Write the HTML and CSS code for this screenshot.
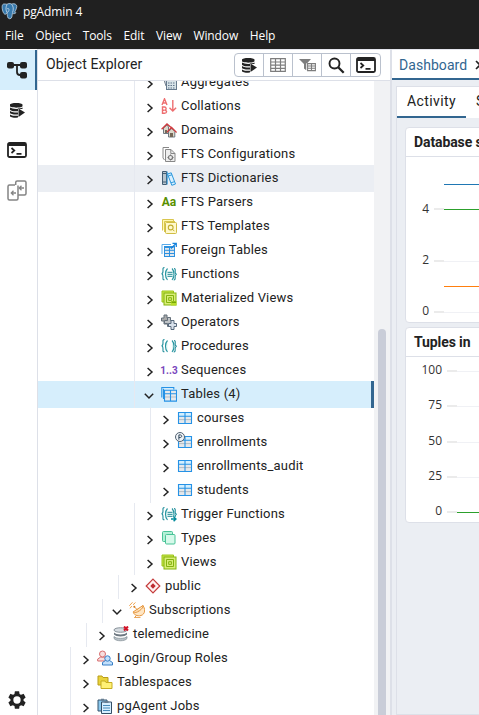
FILE: index.html
```
<!DOCTYPE html>
<html lang="en">
<head>
<meta charset="utf-8">
<title>pgAdmin 4</title>
<link rel="stylesheet" href="styles.css">
</head>
<body>
<svg class="defs" width="0" height="0">
  <symbol id="right" viewBox="0 0 8 10"><path d="M1.6 1l4.400 4-4.400 4" fill="none" stroke="#222" stroke-width="1.500"/></symbol>
  <symbol id="down" viewBox="0 0 10 8"><path d="M.8 1.800L5 6l4.200-4.200" fill="none" stroke="#222" stroke-width="1.500"/></symbol>
  <symbol id="dbplay" viewBox="0 0 16 16"><path d="M1 2.700C1 .4 13.500.4 13.500 2.700V4C13.500 6.200 1 6.200 1 4zM1 5.600c2.500 1.800 10 1.800 12.500 0v1.500L9 6.700v2.600C5 9.500 1 8.700 1 7.400zM1 9c2 1.400 5 1.600 8 1.500v1.900c-4 .2-8-.3-8-1.700zM1 12.400c2 1.300 5 1.500 8 1.400v1.800c-4 .2-8-.3-8-1.700z" fill="#222"/><path d="M9.500 6.500l6.500 4-6.500 4.500z" fill="#222"/></symbol>
  <symbol id="terminal" viewBox="0 0 20 16"><rect x="1" y="1" width="18" height="14" rx="1.500" fill="none" stroke="#222" stroke-width="1.800"/><path d="M1 1.500h18v2.500H1z" fill="#222"/><path d="M4.500 6l2.800 2.500-2.800 2.500M9.500 11.800h5" fill="none" stroke="#222" stroke-width="1.700"/></symbol>
  <symbol id="aggregates" viewBox="0 0 16 16"><path d="M1 0h8v12H5z" fill="#ccd3dc" stroke="#7c8794"/><rect x="5.500" y="1.500" width="10" height="14" fill="#d7e3e8" stroke="#667a8e"/><path d="M7 3.500h7v3H7z" fill="#a3cf3b"/><path d="M7 9h7M7 11.500h7M7 14h7" stroke="#61758c" stroke-dasharray="1.500 1"/></symbol>
  <symbol id="collations" viewBox="0 0 16 16"><path d="M1 7L3.500.8 6 7M1.800 5h3.400M1.500 9v6.200h2c2.700 0 2.700-3 .3-3 2-.3 1.600-3.200-.3-3.200zM1.500 12.200h2M11.800 2v11M8.500 9.800l3.300 3.300 3.300-3.300" fill="none" stroke="#ee6e70" stroke-width="1.400"/></symbol>
  <symbol id="domains" viewBox="0 0 16 16"><path d="M2.500 6v5.500h5V5L6 3zM7.500 9.500V15h6.300V9.500l-3-3z" fill="#ddd8cb" stroke="#6f7881"/><path d="M.6 7.300L6 2l5.800 5M5.600 10.500l5-5 5 5" fill="none" stroke="#cf3a3e" stroke-width="1.300"/><path d="M9 11h3v4H9zM4 8h2v3H4z" fill="#756858"/></symbol>
  <symbol id="ftsconfig" viewBox="0 0 16 16"><path d="M2 12V1.500h6M2 12l1.500 2" fill="none" stroke="#888"/><path d="M4.500 3.500H10l4 4v8H4.500z" fill="#eee" stroke="#888"/><path d="M9.800 3.500v4H14" fill="none" stroke="#888"/><circle cx="9.500" cy="11.500" r="2" fill="none" stroke="#777" stroke-width="1.200"/><path d="M9.500 8.500v1M9.500 13.500v1M6.500 11.500h1M11.500 11.500h1" stroke="#777"/></symbol>
  <symbol id="dictionary" viewBox="0 0 16 16"><path d="M1.500 1.500h4v13h-4z" fill="#b8c4cd" stroke="#435c72"/><path d="M1.500 3.500h4M1.500 12h4" stroke="#435c72"/><path d="M6.500 4l3.700-1.200 4.300 11.200-3.700 1.300z" fill="#d9f0ff" stroke="#2c98dc"/><path d="M7.300 6l3.600-1.200M10 12.800l3.700-1.200M6.200 1.500v13" stroke="#2c98dc"/></symbol>
  <symbol id="templates" viewBox="0 0 16 16"><path d="M1.500 12.500v-11h11v2M3.500 14V3.500H14" fill="#fff7b0" stroke="#d9c64f"/><rect x="4.500" y="4.500" width="11" height="11" rx="1" fill="#fff9cc" stroke="#d0bd45"/><circle cx="9.700" cy="9.500" r="2.400" fill="none" stroke="#c2ad30" stroke-width="1.100"/><path d="M11.400 11.200l2 2" stroke="#c2ad30"/></symbol>
  <symbol id="foreign" viewBox="0 0 16 16"><path d="M1 12V2.500h9" fill="none" stroke="#5aacea"/><rect x="3.500" y="4.500" width="10" height="10" fill="#e1e6eb" stroke="#2e91df"/><path d="M3.500 5.500h9M3.500 8.300h10M3.500 11.500h10M8.500 5v9.500" stroke="#2e91df"/><path d="M10 6.500l5-5M11.500 1.300h3.800v3.800" fill="none" stroke="#1582dc" stroke-width="1.200"/></symbol>
  <symbol id="braces" viewBox="0 0 16 16"><path d="M3.500 1.500C1.500 1.500 2 3 2 5c0 2-.5 2.700-1.500 2.700C1.500 7.700 2 9 2 11c0 2-.4 2.800 1.500 2.800M13 2.500c2 0 1 2.500 1.200 4 .1 1 .5 1.500 1.500 1.700-1 .2-1.300.8-1.500 1.800-.2 2 .5 4-1.500 4" fill="none" stroke="#218e9b" stroke-width="1.100"/><path d="M6.500 2.500C3.800 5.200 3.800 11 6.500 14M11 2.500c2.700 2.700 2.700 8.500 0 11.500" fill="#dff7f5" stroke="#26949f" stroke-width="1.100"/></symbol>
  <symbol id="functions" viewBox="0 0 16 16"><use href="#braces"/><path d="M6.500 6.300h5M6.500 8.300h5M6.500 10.300h5" stroke="#178692"/></symbol>
  <symbol id="trigger" viewBox="0 0 16 16"><use href="#functions"/><path d="M9 11h7v5H9z" fill="#fff"/><path d="M10 13h5M12.600 10.800l2.300 2.200-2.300 2.300" fill="none" stroke="#058c9c" stroke-width="1.500"/></symbol>
  <symbol id="views" viewBox="0 0 16 16"><path d="M1 1h11.500v11H1z" fill="#c7e44a" stroke="#9cc61a"/><rect x="3" y="3" width="12" height="12" fill="#d8ed77" stroke="#83b30e"/><path d="M5.500 5.500h7v7h-7zM7.700 7.700h2.700v2.700H7.700z" fill="none" stroke="#83b30e"/></symbol>
  <symbol id="matview" viewBox="0 0 16 16"><use href="#views"/><path d="M10 11h5.500v4.500H10z" fill="#b8dd2a"/><path d="M10.500 12.200h4.500" stroke="#699c00" stroke-width="1.300"/></symbol>
  <symbol id="operators" viewBox="0 0 16 16"><path d="M3 1h3v3h3v3H6v3H3V7H.5V4H3z" fill="#aaa" stroke="#65707b"/><path d="M6.500 3.500h3v3h3v3h-3v3h-3v-3h-3v-3h3z" fill="#c0c4c7" stroke="#65707b"/><path d="M10 6.500h3v3h2.500v3H13v3h-3v-3H7.500v-3H10z" fill="#d8e1eb" stroke="#56687c"/></symbol>
  <symbol id="table" viewBox="0 0 16 16"><rect x="1.500" y="2.500" width="13" height="11" fill="#e5e8eb"/><path d="M2 3h12v3H2z" fill="#d3efff"/><path d="M2 9.600h12" stroke="#b4bdc5"/><path d="M1.500 2.500h13v11h-13zM1.500 6.200h13M8 3v10.500" fill="none" stroke="#2592e6" stroke-width="1.100"/></symbol>
  <symbol id="tables" viewBox="0 0 16 16"><path d="M.8 11.500v-10h12v2M2.500 13V2.800" fill="#d6eefc" stroke="#2592e6" stroke-width="1.100"/><rect x="3.500" y="4.300" width="12" height="10.800" rx=".7" fill="#e6e9ec"/><path d="M4 11h11" stroke="#b4bdc5"/><path d="M3.500 4.300h12v10.800h-12zM3.500 7.700h12M9.500 4.500v10.600" fill="none" stroke="#2592e6" stroke-width="1.100"/></symbol>
  <symbol id="types" viewBox="0 0 16 16"><rect x="1.500" y="1.500" width="10" height="10" rx="1" fill="#b4f0d7" stroke="#49c397"/><rect x="4.500" y="4.500" width="9.500" height="9.500" rx="1" fill="#d6f9ea" stroke="#49c397"/></symbol>
  <symbol id="public" viewBox="0 0 16 16"><path d="M8 1.200L14.800 8 8 14.800 1.200 8z" fill="#fff1f0" stroke="#c53b3b" stroke-width="1.200"/><path d="M8 5.300L10.700 8 8 10.700 5.300 8z" fill="#bd2d31"/></symbol>
  <symbol id="subscription" viewBox="0 0 16 16"><path d="M14 3.500C17.500 9 15 13.500 10.500 13.800 7 14 4.300 12 4.300 9.800z" fill="#ffe6c4" stroke="#e5953c"/><path d="M4.300 9.800C5.500 11 8 10.500 10.500 8.700 13 7 14.500 4.800 14 3.500M5.500 5l3.300 3.300M7 14l-1.500 1.700h6" fill="none" stroke="#e5953c"/><circle cx="5.300" cy="4.800" r="1" fill="#d17b20"/><path d="M.3 3.800L3.500.3M1 6.300L2.800 4M4 2.800L6.500.5" stroke="#f0a34d"/></symbol>
  <symbol id="dboff" viewBox="0 0 16 16"><path d="M1 4c0-3 13-3 13 0s-13 3-13 0" fill="#d5dbe0" stroke="#89939b"/><path d="M1 6.500c2 2.500 11 2.500 13 0v2c-2 2.500-11 2.500-13 0z" fill="#6d7881"/><path d="M1 10.500c2 2.500 11 2.500 13 0v2c-2 3-11 3-13 0z" fill="#bac2c8" stroke="#7d8991" stroke-width=".7"/><path d="M11 .5l4 4M15 .5l-4 4" stroke="#d31327" stroke-width="2"/></symbol>
  <symbol id="roles" viewBox="0 0 16 16"><g fill="#f7dede" stroke="#d76c6e"><path d="M.7 11V9l3-2h3l2 2v2z"/><circle cx="5.500" cy="4" r="3"/></g><g fill="#c3e0fb" stroke="#377ec5"><path d="M5.500 15v-2.500l3-2h4l3 2V15z"/><circle cx="10.500" cy="8.500" r="2.700"/></g></symbol>
  <symbol id="spaces" viewBox="0 0 16 16"><path d="M1 2h4l1 1.500h5V11H1z" fill="#e9d33c" stroke="#b99d19"/><path d="M4 7h4l1 1.500h6v6H4z" fill="#fff176" stroke="#c6ad22"/></symbol>
  <symbol id="jobs" viewBox="0 0 16 16"><path d="M1 2h9v11H1z" fill="#8bc8ed" stroke="#34536d"/><path d="M4.500 4h10v11.500h-10z" fill="#d6efff" stroke="#344f66"/><path d="M7.500 3h4v2h-4zM4 .8h3v2H4z" fill="#667e92"/><path d="M6 7.500h7M6 10h7M6 12.500h7" stroke="#478bb9"/></symbol>
</svg>

<header class="top">
  <div class="title">
    <svg class="logo" width="17" height="17" viewBox="0 0 17 17"><path d="M3 1C1 1 .8 4 1.500 7s2 5 3.500 4l1-1.300c.3 2.500.2 5.800 2.500 6 2.800.2 2.500-3 2.800-5.200 1.500.5 3.200 0 3.600-.8-1 0-1.400-.2-1.200-.7C15 7 16.400 3.500 15.500 2.200 14 .2 12 .8 10.500 1 8.500.2 7 .6 6 1.300 5 1 4 1 3 1z" fill="#3679ad" stroke="#bdd0df" stroke-width=".8"/><path d="M6 1.500C4.300 4.500 5 8 6 9.500M10.500 1.200c2 2 2.300 5 1 8.500M6 6c1-1 2-.5 2 .7S7.300 9 6 9.500" fill="none" stroke="#cbdce8" stroke-width=".8"/></svg>
    <span>pgAdmin 4</span>
  </div>
  <nav class="menu"><span>File</span><span>Object</span><span>Tools</span><span>Edit</span><span>View</span><span>Window</span><span>Help</span></nav>
</header>

<main class="app">
  <aside class="rail">
    <div class="cell active"><svg width="20" height="18" viewBox="0 0 20 18"><path d="M5 4h10M10 4v7q0 3 3 3h3" fill="none" stroke="#222" stroke-width="1.800"/><rect y="1" width="7" height="6.500" rx="2" fill="#222"/><rect x="13" y="1" width="7" height="6.500" rx="2" fill="#222"/><rect x="13" y="11" width="7" height="6.500" rx="2" fill="#222"/></svg></div>
    <div class="cell"><svg width="16" height="16"><use href="#dbplay"/></svg></div>
    <div class="cell"><svg width="20" height="16"><use href="#terminal"/></svg></div>
    <div class="cell"><svg width="20" height="21" viewBox="0 0 20 21"><path d="M8 5H2.500Q1 5 1 6.500v12Q1 20 2.500 20h7q1.500 0 1.500-1.500V16M11 5.500V16M8.700 5V2.500Q8.700 1 10.200 1h7.300Q19 1 19 2.500v11q0 1.500-1.500 1.500H11" fill="none" stroke="#848484" stroke-width="1.500"/><path d="M9 13H4.500M6.500 10.800L4.300 13l2.200 2.200M17 8h-4.500M14.500 5.800L12.300 8l2.200 2.200" fill="none" stroke="#848484" stroke-width="1.300"/></svg></div>
    <div class="cell settings"><svg width="22" height="22" viewBox="0 0 24 24"><path d="M19.140 12.940c.04-.3.060-.61.060-.94s-.02-.64-.07-.94l2.030-1.580a.5.5 0 0 0 .12-.61l-1.920-3.320a.5.5 0 0 0-.59-.22l-2.390.96a7 7 0 0 0-1.620-.94l-.36-2.540a.5.5 0 0 0-.48-.41h-3.840a.5.500 0 0 0-.47.410l-.36 2.540a7 7 0 0 0-1.620.94l-2.390-.96a.5.500 0 0 0-.59.220L2.740 8.870a.5.500 0 0 0 .12.610l2.030 1.580a6 6 0 0 0 0 1.880l-2.030 1.580a.5.500 0 0 0-.12.610l1.920 3.320c.12.220.37.290.59.220l2.390-.96c.5.380 1.030.7 1.620.94l.36 2.540c.05.240.24.410.48.410h3.840c.24 0 .44-.17.470-.41l.36-2.540a7 7 0 0 0 1.620-.94l2.390.96c.22.080.47 0 .59-.22l1.920-3.320a.5.500 0 0 0-.12-.61zM12 16a4 4 0 1 1 0-8 4 4 0 0 1 0 8z" fill="#222"/></svg></div>
  </aside>

  <section class="explorer">
    <div class="bar">
      <h1>Object Explorer</h1>
      <div class="tools">
        <span><svg width="16" height="16"><use href="#dbplay"/></svg></span>
        <span><svg width="16" height="14" viewBox="0 0 16 14"><path d="M.7.700h14.600v12.600H.7zM.7 4h14.600M.7 7.200h14.600M.7 10.300h14.600M5.500 1v12M10.500 1v12" fill="none" stroke="#7d7d7d" stroke-width="1.200"/></svg></span>
        <span><svg width="17" height="14" viewBox="0 0 17 14"><path d="M0 1h12L7.500 6v6.500L5 10.500V6z" fill="#7d7d7d"/><path d="M7.500 5h9v8h-9z" fill="#fff"/><path d="M8.600 5.600h7.800v7H8.600zM8.600 8h7.800M8.600 10.300h7.800M12.500 5.600v7" fill="none" stroke="#7d7d7d" stroke-width="1.100"/></svg></span>
        <span><svg width="17" height="17" viewBox="0 0 17 17"><circle cx="6.500" cy="6.500" r="5" fill="none" stroke="#222" stroke-width="1.900"/><path d="M10.200 10.200l5.500 5.500" stroke="#222" stroke-width="2.300"/></svg></span>
        <span><svg width="20" height="16"><use href="#terminal"/></svg></span>
      </div>
    </div>
    <div class="scroller">
      <div class="tree">
        <div class="row l4"><svg class="r"><use href="#right"/></svg><svg class="i"><use href="#aggregates"/></svg><span>Aggregates</span></div>
        <div class="row l4"><svg class="r"><use href="#right"/></svg><svg class="i"><use href="#collations"/></svg><span>Collations</span></div>
        <div class="row l4"><svg class="r"><use href="#right"/></svg><svg class="i"><use href="#domains"/></svg><span>Domains</span></div>
        <div class="row l4"><svg class="r"><use href="#right"/></svg><svg class="i"><use href="#ftsconfig"/></svg><span>FTS Configurations</span></div>
        <div class="row l4 hover"><svg class="r"><use href="#right"/></svg><svg class="i"><use href="#dictionary"/></svg><span>FTS Dictionaries</span></div>
        <div class="row l4"><svg class="r"><use href="#right"/></svg><b class="i aa">Aa</b><span>FTS Parsers</span></div>
        <div class="row l4"><svg class="r"><use href="#right"/></svg><svg class="i"><use href="#templates"/></svg><span>FTS Templates</span></div>
        <div class="row l4"><svg class="r"><use href="#right"/></svg><svg class="i"><use href="#foreign"/></svg><span>Foreign Tables</span></div>
        <div class="row l4"><svg class="r"><use href="#right"/></svg><svg class="i"><use href="#functions"/></svg><span>Functions</span></div>
        <div class="row l4"><svg class="r"><use href="#right"/></svg><svg class="i"><use href="#matview"/></svg><span>Materialized Views</span></div>
        <div class="row l4"><svg class="r"><use href="#right"/></svg><svg class="i"><use href="#operators"/></svg><span>Operators</span></div>
        <div class="row l4"><svg class="r"><use href="#right"/></svg><svg class="i"><use href="#braces"/></svg><span>Procedures</span></div>
        <div class="row l4"><svg class="r"><use href="#right"/></svg><b class="i seq">1..3</b><span>Sequences</span></div>
        <div class="row l4 selected"><svg class="d"><use href="#down"/></svg><svg class="i"><use href="#tables"/></svg><span>Tables (4)</span></div>
        <div class="row l5"><svg class="r"><use href="#right"/></svg><svg class="i"><use href="#table"/></svg><span>courses</span></div>
        <div class="row l5"><svg class="r"><use href="#right"/></svg><svg class="i" viewBox="0 0 16 16"><use href="#table" width="16" height="16"/><circle cx="3" cy="3" r="4.500" fill="#eef3f7" stroke="#526170"/><path d="M1.900 5.700V.9h1.300c2 0 2 2.600 0 2.600H1.900" fill="none" stroke="#34495d"/></svg><span>enrollments</span></div>
        <div class="row l5"><svg class="r"><use href="#right"/></svg><svg class="i"><use href="#table"/></svg><span>enrollments_audit</span></div>
        <div class="row l5"><svg class="r"><use href="#right"/></svg><svg class="i"><use href="#table"/></svg><span>students</span></div>
        <div class="row l4"><svg class="r"><use href="#right"/></svg><svg class="i"><use href="#trigger"/></svg><span>Trigger Functions</span></div>
        <div class="row l4"><svg class="r"><use href="#right"/></svg><svg class="i"><use href="#types"/></svg><span>Types</span></div>
        <div class="row l4"><svg class="r"><use href="#right"/></svg><svg class="i"><use href="#views"/></svg><span>Views</span></div>
        <div class="row l3"><svg class="r"><use href="#right"/></svg><svg class="i"><use href="#public"/></svg><span>public</span></div>
        <div class="row l2"><svg class="d"><use href="#down"/></svg><svg class="i"><use href="#subscription"/></svg><span>Subscriptions</span></div>
        <div class="row l1"><svg class="r"><use href="#right"/></svg><svg class="i"><use href="#dboff"/></svg><span>telemedicine</span></div>
        <div class="row l0"><svg class="r"><use href="#right"/></svg><svg class="i"><use href="#roles"/></svg><span>Login/Group Roles</span></div>
        <div class="row l0"><svg class="r"><use href="#right"/></svg><svg class="i"><use href="#spaces"/></svg><span>Tablespaces</span></div>
        <div class="row l0"><svg class="r"><use href="#right"/></svg><svg class="i"><use href="#jobs"/></svg><span>pgAgent Jobs</span></div>
      </div>
      <div class="track"><div class="thumb"></div></div>
    </div>
  </section>

  <section class="dash">
    <div class="tabs"><div class="tab">Dashboard</div><svg width="10" height="10" viewBox="0 0 10 10"><path d="M1 1l8 8M9 1L1 9" stroke="#222" stroke-width="1.600"/></svg></div>
    <div class="panel">
      <div class="subtabs"><div class="sub on">Activity</div><div class="sub">State</div></div>
      <div class="card sessions">
        <h2>Database sessions</h2>
        <svg class="chart" width="200" height="165" viewBox="406 157 200 165">
          <g class="grid"><path d="M444 209.500h150M444 261.500h150M444 312.500h150"/></g>
          <g class="ticks"><path d="M434 209h10M434 261h10M434 312h10"/></g>
          <g class="lab"><text x="429" y="213">4</text><text x="429" y="264">2</text><text x="429" y="315">0</text></g>
          <path class="line" d="M444 184.500h150" stroke="#1f77b4"/><path class="line" d="M444 209.500h150" stroke="#2ca02c"/><path class="line" d="M444 286.500h150" stroke="#ff7f0e"/>
        </svg>
      </div>
      <div class="card tuples">
        <h2>Tuples in</h2>
        <svg class="chart" width="200" height="165" viewBox="406 357 200 165">
          <g class="grid"><path d="M457 371.500h150M457 406.500h150M457 442.500h150M457 477.500h150"/></g>
          <g class="ticks"><path d="M447 371h10M447 406h10M447 442h10M447 477h10M447 512h10"/></g>
          <g class="lab"><text x="442" y="374">100</text><text x="442" y="409">75</text><text x="442" y="445">50</text><text x="442" y="480">25</text><text x="442" y="515">0</text></g>
          <path class="line" d="M457 512.500h150" stroke="#2ca02c"/>
        </svg>
      </div>
    </div>
  </section>
</main>
</body>
</html>
```
FILE: styles.css
```
* { box-sizing: border-box; }
html, body { margin: 0; height: 100%; overflow: hidden; }
body { display: flex; flex-direction: column; background: #fff; color: #222; font-family: Roboto, sans-serif; }
svg { display: block; flex: none; overflow: visible; }
.defs { width: 0; height: 0; position: absolute; }

.top { height: 49px; flex: none; background: #202020; color: #fff; font-family: "Open Sans", sans-serif; font-size: 12px; letter-spacing: -.12px; }
.title { height: 24px; display: flex; align-items: center; gap: 5px; padding-left: 1px; }
.title .logo { margin-top: -2px; }
.title span { margin-top: -1px; }
.menu { height: 23px; display: flex; align-items: center; gap: 11.7px; padding-left: 5px; }

.app { flex: 1; min-height: 0; display: flex; }
.rail { width: 38px; flex: none; padding-top: 1px; border-right: 1px solid #dde0e8; display: flex; flex-direction: column; }
.cell { height: 40px; display: flex; align-items: center; padding-left: 7px; }
.cell:nth-child(2) { padding-left: 9px; }
.cell.active { background: #d6eefc; border-right: 2px solid #326690; }
.cell.settings { margin-top: auto; height: 30px; padding-left: 6px; }

.explorer { width: 353px; flex: none; display: flex; flex-direction: column; border-right: 1px solid #dde0e8; }
.bar { height: 32px; flex: none; border-top: 1px solid #e4e6ed; border-bottom: 1px solid #dde0e8; display: flex; align-items: center; justify-content: space-between; padding: 0 9px 0 8px; }
.bar h1 { margin: -2px 0 0; font-size: 14px; font-weight: 400; letter-spacing: .12px; }
.tools { display: flex; height: 24px; border: 1px solid #bac1cd; border-radius: 4px; }
.tools span { width: 29px; display: flex; align-items: center; justify-content: center; border-right: 1px solid #bac1cd; }
.tools span:last-child { border: 0; }
.scroller { flex: 1; min-height: 0; display: flex; overflow: hidden; }
.tree { width: 336px; margin-top: -10px; flex: none; }
.row { height: 24px; display: flex; align-items: center; font-size: 13px; letter-spacing: .18px; white-space: nowrap; background: linear-gradient(#e6e9f0, #e6e9f0) var(--g) 0 / 1px 100% no-repeat; padding: 0 0 2px calc(var(--g) + 12px); }
.l0 { --g: 32px; } .l1 { --g: 48px; } .l2 { --g: 64px; } .l3 { --g: 80px; } .l4 { --g: 96px; } .l5 { --g: 112px; }
.hover, .selected { height: 27px; margin: -2px 0 -1px; padding-bottom: 2px; padding-top: 1px; }
.hover { background-color: #ebeef3; }
.selected { background-color: #d6eefc; border-right: 3px solid #326690; }
.r { width: 8px; height: 10px; margin: 3px 7px 0 0; }
.d { width: 10px; height: 8px; margin: 3px 7px 0 -2px; }
.i { width: 16px; height: 16px; margin-right: 4px; flex: none; }
.aa, .seq { display: flex; align-items: center; justify-content: center; letter-spacing: 0; }
.aa { color: #589000; font-size: 12px; }
.seq { color: #7946bd; font-size: 10px; }
.row span { margin-top: -1px; }
.track { width: 16px; flex: none; background: #f1f2f4; display: flex; justify-content: center; padding-top: 248px; }
.thumb { width: 8px; background: #c9cdd8; border-radius: 4px 4px 0 0; }

.dash { flex: 1; min-width: 0; overflow: hidden; display: flex; flex-direction: column; background: #ebeef3; border-left: 1px solid #dde0e8; }
.tabs { height: 31px; flex: none; border-top: 1px solid #e4e6ed; background: #fff; display: flex; align-items: center; box-shadow: inset 0 -2px #326690; }
.tab { height: 30px; line-height: 30px; padding: 0 7px; width: 83px; flex: none; color: #326690; font-size: 14px; letter-spacing: .05px; }
.panel { flex: 1; margin: 6px 0 0 4px; border: 1px solid #dde0e8; width: 600px; }
.subtabs { height: 31px; background: #fff; display: flex; font-size: 14px; letter-spacing: .4px; }
.sub { padding: 0 10px; line-height: 28px; height: 31px; }
.sub.on { width: 69px; border-bottom: 2px solid #326690; }
.card { margin-left: 8px; width: 300px; border: 1px solid #dde0e8; border-radius: 4px; background: #fff; overflow: hidden; }
.sessions { margin-top: 9px; height: 196px; }
.tuples { margin-top: 4px; height: 196px; }
.card h2 { margin: 0; height: 29px; line-height: 28px; border-bottom: 1px solid #dde0e8; padding-left: 8px; font-size: 14px; font-weight: 700; letter-spacing: -.1px; }
.grid { stroke: #f0f1f5; }
.ticks { stroke: #ebebeb; stroke-width: 2; }
.lab { font: 12px "Open Sans", sans-serif; fill: #333; text-anchor: end; }
.line { stroke-width: 1; }
```
